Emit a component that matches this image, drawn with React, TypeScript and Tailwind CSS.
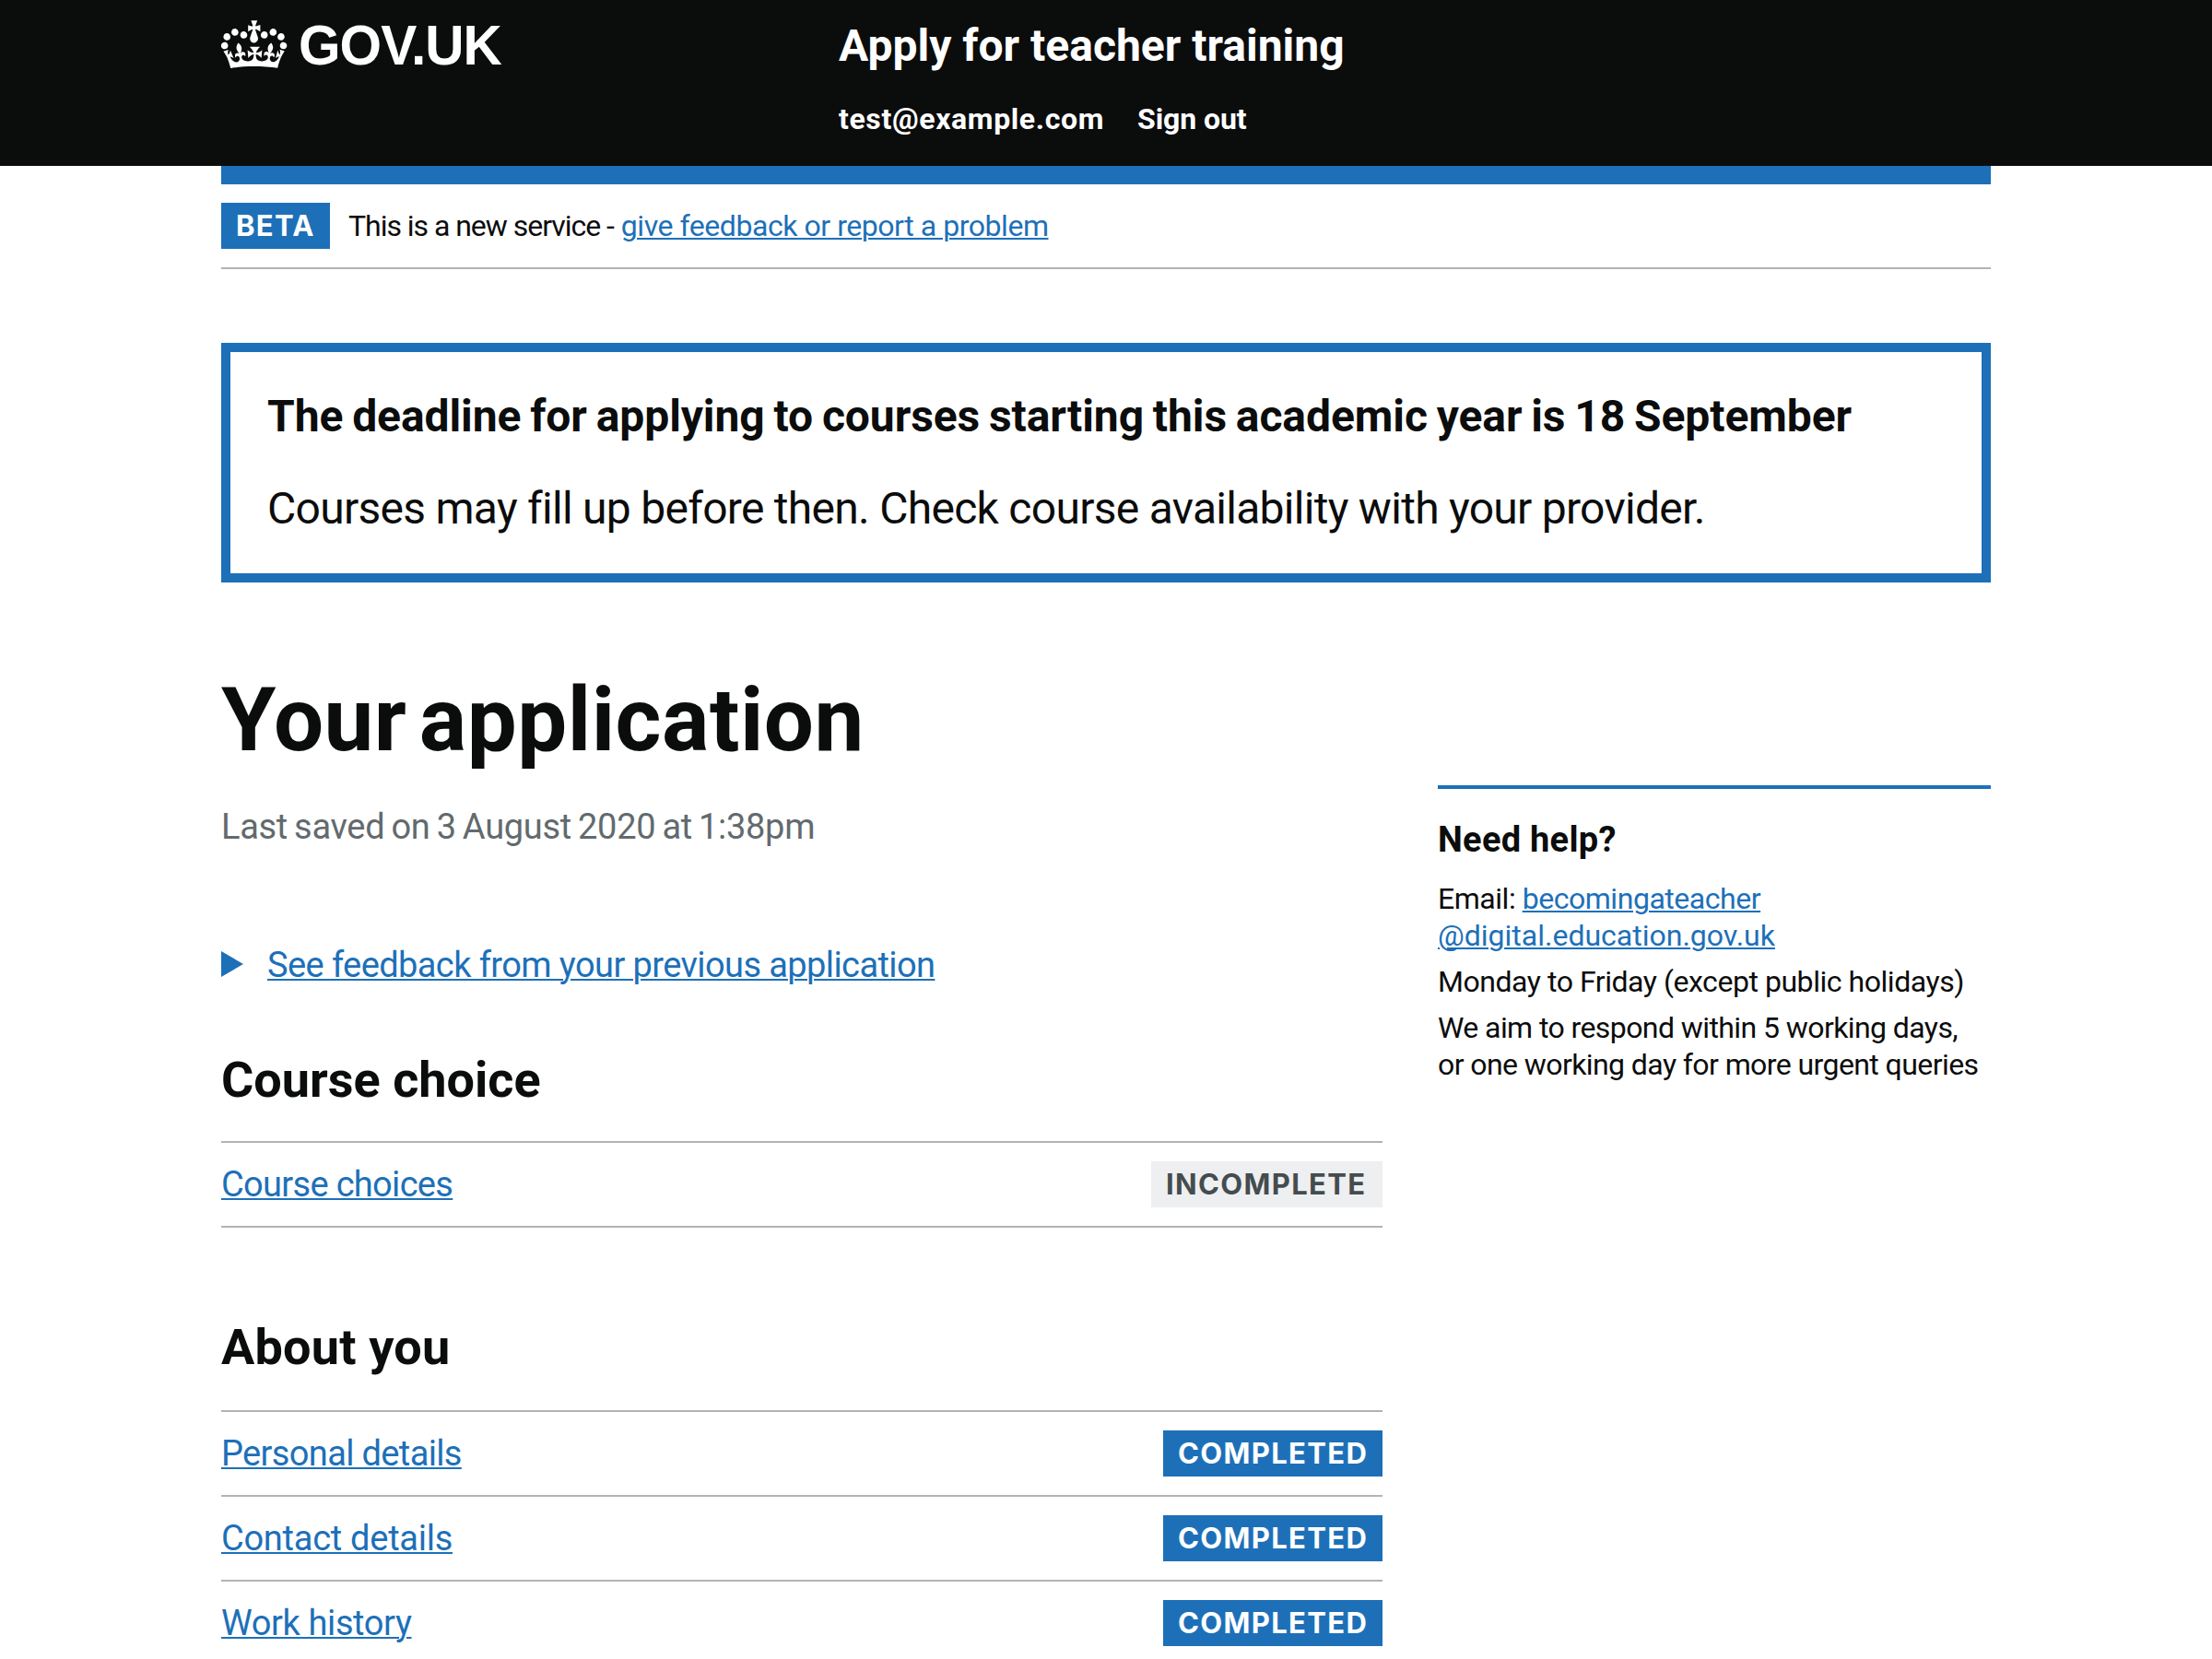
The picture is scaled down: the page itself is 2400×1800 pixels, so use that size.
import React from "react";
import clsx from "clsx";

function Crown() {
  return (
    <svg viewBox="0 0 36 32" className="mt-[14px] h-16 w-[72px] shrink-0" fill="currentColor" aria-hidden="true">
      <path d="M6.7 12.2c1 .4 2.1-.1 2.5-1s-.1-2.1-1-2.5c-1-.4-2.1.1-2.5 1-.4 1 0 2.1 1 2.5m-4.3 2.5c1 .4 2.1-.1 2.5-1 .4-1-.1-2.1-1-2.5-1-.4-2.1.1-2.5 1-.5 1 0 2.1 1 2.5m-1.3 4.8c1 .4 2.1-.1 2.5-1 .4-1-.1-2.1-1-2.5-1-.4-2.1.1-2.5 1-.4 1 0 2.1 1 2.5m10.4-5.8c1 .4 2.1-.1 2.5-1s-.1-2.1-1-2.5c-1-.4-2.1.1-2.5 1s0 2.1 1 2.5m17.4-1.5c-1 .4-2.1-.1-2.5-1s.1-2.1 1-2.5c1-.4 2.1.1 2.5 1 .5 1 0 2.1-1 2.5m4.3 2.5c-1 .4-2.1-.1-2.5-1-.4-1 .1-2.1 1-2.5 1-.4 2.1.1 2.5 1 .5 1 0 2.1-1 2.5m1.3 4.8c-1 .4-2.1-.1-2.5-1-.4-1 .1-2.1 1-2.5 1-.4 2.1.1 2.5 1s0 2.1-1 2.5m-10.4-5.8c-1 .4-2.1-.1-2.5-1s.1-2.1 1-2.5c1-.4 2.1.1 2.5 1s0 2.1-1 2.5m-5.3-4.9 2.4 1.3V6.5l-2.4.8c-.1-.1-.1-.2-.2-.2s1-3 1-3h-3.4l1 3c-.1.1-.2.1-.2.2-.1.1-2.4-.7-2.4-.7v3.5L17 8.8c-.1.1 0 .2.1.3l-1.4 4.2c-.1.2-.1.4-.1.7 0 1.1.8 2.1 1.9 2.2h.6C19.2 16 20 15 20 14c0-.2 0-.4-.1-.7l-1.4-4.2c.2-.1.3-.3.3-.4m-1 20.3c4.6 0 8.9.3 12.8.9 1.1-4.6 2.4-7.2 3.8-9.1l-2.6-.9c.3 1.3.3 1.9 0 2.8-.4-.4-.8-1.2-1.1-2.4l-1.2 4.2c.8-.5 1.4-.9 2-.9-1.2 2.6-2.7 3.2-3.6 3-1.2-.2-1.7-1.3-1.5-2.2.3-1.3 1.6-1.6 2.2-.1 1.2-2.4-.8-3.1-2.1-2.4 1.9-1.9 2.2-3.6.6-5.7-2.2 1.7-2.2 3.3-1.2 5.6-1.3-1.5-3.3-.7-2.5 1.7.9-1.4 2.1-.5 2 .8-.2 1.2-1.7 2.1-3.7 1.9-2.8-.2-2.9-2.2-2.9-3.7.7-.1 1.9.5 3 2l.4-4.4c-1.1 1.2-2.2 1.4-3.3 1.4.4-1.2 2.1-3.1 2.1-3.1h-5.5s1.8 2 2.1 3.1c-1.1 0-2.2-.3-3.3-1.4l.4 4.4c1.1-1.5 2.3-2.1 3-2-.1 1.6-.2 3.5-2.9 3.7-1.9.2-3.5-.7-3.7-1.9-.2-1.3 1-2.2 1.9-.7.8-2.4-1.3-3.1-2.5-1.7 1-2.3.9-3.9-1.2-5.6-1.6 2.1-1.3 3.8.6 5.7-1.3-.7-3.2 0-2.1 2.4.6-1.5 1.9-1.1 2.2.1.2.9-.4 1.9-1.5 2.2-1 .2-2.5-.5-3.7-3 .7 0 1.3.4 2 .9L5 20.4c-.3 1.2-.7 1.9-1.2 2.4-.3-.8-.2-1.5 0-2.8l-2.6.9C2.7 22.8 4 25.4 5.1 30c3.8-.7 8.2-1 12.7-1" />
    </svg>
  );
}

const LINK = "text-[#1d70b8] underline decoration-2 underline-offset-2";

function Tag({ label, className }: { label: string; className: string }) {
  return (
    <strong
      className={clsx(
        "block h-[50px] shrink-0 pl-4 font-['Inter',sans-serif] text-[31px] leading-[49px] font-bold tracking-[1.35px] whitespace-nowrap",
        className,
      )}
    >
      {label}
    </strong>
  );
}

type Task = { name: string; tracking: string; done: boolean };

function TaskList({ tasks, className }: { tasks: Task[]; className: string }) {
  return (
    <ul className={clsx("border-t-2 border-[#b1b4b6]", className)}>
      {tasks.map((task) => (
        <li key={task.name} className="flex items-center justify-between border-b-2 border-[#b1b4b6] py-5">
          <a className={clsx("text-[38px] leading-[50px]", LINK, task.tracking)}>{task.name}</a>
          {task.done ? (
            <Tag label="COMPLETED" className="w-[238px] bg-[#1d70b8] text-white" />
          ) : (
            <Tag label="INCOMPLETE" className="w-[251px] bg-[#eeeff1] text-[#454c4e]" />
          )}
        </li>
      ))}
    </ul>
  );
}

const courseTasks: Task[] = [{ name: "Course choices", tracking: "tracking-[-0.018em]", done: false }];

const aboutTasks: Task[] = [
  { name: "Personal details", tracking: "tracking-[-0.017em]", done: true },
  { name: "Contact details", tracking: "tracking-[-0.007em]", done: true },
  { name: "Work history", tracking: "tracking-[-0.01em]", done: true },
];

export default function App() {
  return (
    <div className="h-[1800px] w-[2400px] overflow-hidden bg-white font-['Roboto',sans-serif] whitespace-nowrap text-[#0b0c0c]">
      <header className="flex h-[180px] bg-[#0b0c0c] px-60 text-white">
        <div className="flex w-[670px] gap-3">
          <Crown />
          <span className="mt-[19px] h-[60px] origin-left scale-x-[0.96] font-['Liberation_Sans',sans-serif] text-[61px] leading-[60px] font-bold tracking-[-1px]">
            GOV.UK
          </span>
        </div>
        <div className="pt-5 font-bold">
          <div className="text-[48px] leading-[60px]">Apply for teacher training</div>
          <nav className="mt-[29px] flex gap-9 text-[32px] leading-10">
            <span className="tracking-[0.0197em]">test@example.com</span>
            <span className="tracking-[-0.0024em]">Sign out</span>
          </nav>
        </div>
      </header>

      <div className="mx-60">
        <div className="h-5 bg-[#1d70b8]" />
        <div className="flex items-center border-b-2 border-[#b1b4b6] py-5">
          <Tag label="BETA" className="w-[118px] bg-[#1d70b8] text-white" />
          <p className="ml-5 flex gap-2 text-[32px] leading-10">
            <span className="tracking-[-0.0322em]">This is a new service -</span>
            <a className={clsx(LINK, "tracking-[-0.0142em]")}>give feedback or report a problem</a>
          </p>
        </div>

        <section className="mt-20 border-[10px] border-[#1d70b8] p-10 text-[48px] leading-[60px]">
          <h2 className="font-bold tracking-[-0.08px] [word-spacing:-2px]">
            The deadline for applying to courses starting this academic year is 18 September
          </h2>
          <p className="mt-10 tracking-[-0.015em]">
            Courses may fill up before then. Check course availability with your provider.
          </p>
        </section>

        <div className="flex justify-between">
          <main className="w-[1260px] pt-[99px]">
            <h1 className="text-[96px] leading-[100px] font-bold tracking-[0.5px] [word-spacing:-11px]">
              Your application
            </h1>
            <p className="mt-[41px] text-[38px] leading-[50px] tracking-[-0.3px] text-[#626a6e] [word-spacing:-2px]">
              Last saved on 3 August 2020 at 1:38pm
            </p>
            <div className="mt-[100px] flex items-center gap-[26px] text-[38px] leading-[50px]">
              <svg viewBox="0 0 24 28" className="mb-0.5 h-7 w-6 fill-[#1d70b8]" aria-hidden="true">
                <path d="M0 0 24 14 0 28z" />
              </svg>
              <a className={clsx(LINK, "tracking-[-0.0156em]")}>See feedback from your previous application</a>
            </div>

            <h2 className="mt-[70px] text-[54px] leading-[60px] font-bold">Course choice</h2>
            <TaskList tasks={courseTasks} className="mt-9" />

            <h2 className="mt-[100px] text-[54px] leading-[60px] font-bold tracking-[0.0038em]">About you</h2>
            <TaskList tasks={aboutTasks} className="mt-[38px]" />
          </main>

          <aside className="mt-[220px] w-[600px] self-start border-t-4 border-[#1d70b8] pt-[30px] text-[32px] leading-10">
            <h2 className="text-[38px] leading-[50px] font-bold tracking-[0.0072em]">Need help?</h2>
            <p className="mt-[19px]">
              <span className="tracking-[-0.0145em]">
                Email: <a className={LINK}>becomingateacher</a>
              </span>
              <br />
              <a className={LINK}>@digital.education.gov.uk</a>
            </p>
            <p className="mt-2.5 tracking-[-0.0142em]">Monday to Friday (except public holidays)</p>
            <p className="mt-2.5 tracking-[-0.0182em]">
              We aim to respond within 5 working days,
              <br />
              or one working day for more urgent queries
            </p>
          </aside>
        </div>
      </div>
    </div>
  );
}
